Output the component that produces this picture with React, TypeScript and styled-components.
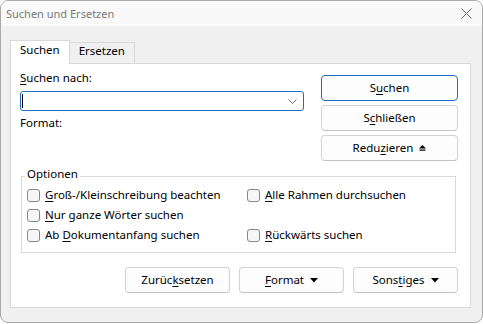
import React from 'react';
import styled, { createGlobalStyle } from 'styled-components';

const Global = createGlobalStyle`
  html, body { margin: 0; padding: 0; background: #ffffff; }
  body {
    font-family: "Segoe UI", "Noto Sans", sans-serif;
    font-size: 11.5px;
    color: #000;
  }
  * { box-sizing: border-box; }
`;

const Window = styled.div`
  width: 483px;
  height: 323px;
  border: 1px solid #a9a9a9;
  border-radius: 8px;
  background: #f0f0f0;
  overflow: hidden;
  display: flex;
  flex-direction: column;
`;

const TitleBar = styled.div`
  height: 25px;
  flex: none;
  background: #f9f9f9;
  display: flex;
  align-items: center;
  justify-content: space-between;
  padding: 0 10px 0 5px;
`;

const Title = styled.span`
  color: #7a7a7a;
  line-height: 16px;
  font-size: 11px;
`;

const Body = styled.div`
  flex: 1;
  display: flex;
  flex-direction: column;
  padding: 14px 11px 14px 9px;
`;

const TabStrip = styled.div`
  display: flex;
  align-items: flex-end;
  height: 23px;
  position: relative;
  z-index: 1;
`;

const Tab = styled.div<{ $active?: boolean }>`
  border: 1px solid #d9d9d9;
  border-bottom: none;
  padding: ${p => (p.$active ? '1px 9px 0' : '0 9px')};
  height: ${p => (p.$active ? '24px' : '21px')};
  margin-bottom: ${p => (p.$active ? '-1px' : '0')};
  margin-left: ${p => (p.$active ? '0' : '-1px')};
  background: ${p => (p.$active ? '#ffffff' : '#f0f0f0')};
  line-height: 16px;
`;

const Panel = styled.div`
  flex: 1;
  background: #ffffff;
  border: 1px solid #d9d9d9;
  padding: 6px 12px 14px 9px;
  display: flex;
  flex-direction: column;
`;

const TopSection = styled.div`
  display: grid;
  grid-template-columns: 1fr 137px;
  column-gap: 17px;
`;

const FieldColumn = styled.div`
  display: flex;
  flex-direction: column;
`;

const Label = styled.div<{ $gap?: number }>`
  line-height: 16px;
  margin-top: ${p => p.$gap ?? 0}px;
`;

const Combo = styled.div`
  margin-top: 5px;
  height: 20px;
  border: 1px solid #1b6ec2;
  border-radius: 3px;
  background: #fff;
  display: flex;
  align-items: center;
  padding: 0 6px 0 1px;
`;

const Caret = styled.span`
  width: 1px;
  height: 14px;
  background: #000;
`;

const Spacer = styled.span`
  flex: 1;
`;

const ButtonColumn = styled.div`
  margin-top: 5px;
  display: flex;
  flex-direction: column;
  gap: 4px;
`;

const Button = styled.div<{ $primary?: boolean; $width?: number }>`
  height: 26px;
  width: ${p => (p.$width ? `${p.$width}px` : 'auto')};
  border: 1px solid ${p => (p.$primary ? '#1b6ec2' : '#d3d3d3')};
  border-bottom-color: ${p => (p.$primary ? '#1b6ec2' : '#c3c3c3')};
  border-radius: 4px;
  background: #fdfdfd;
  display: flex;
  align-items: center;
  justify-content: center;
  gap: 6px;
  line-height: 16px;
`;

const Key = styled.span`
  text-decoration: underline;
  text-decoration-thickness: 1px;
  text-underline-offset: 2px;
`;

const GroupBox = styled.div`
  position: relative;
  margin: 15px 2px 0 1px;
  border: 1px solid #d9d9d9;
  padding: 8px 0 7px 5px;
  display: grid;
  grid-template-columns: 220px 1fr;
  grid-auto-rows: 20px;
`;

const Legend = styled.span`
  position: absolute;
  top: -11px;
  left: 3px;
  padding: 0 2px;
  background: #fff;
  line-height: 16px;
`;

const Option = styled.label<{ $col?: number }>`
  display: flex;
  align-items: center;
  gap: 5px;
  grid-column: ${p => p.$col ?? 1};
  line-height: 16px;
`;

const Check = styled.span`
  width: 13px;
  height: 13px;
  flex: none;
  border: 1px solid #878787;
  border-radius: 3px;
  background: #f6f6f6;
`;

const BottomRow = styled.div`
  margin-top: 14px;
  display: flex;
  justify-content: flex-end;
  gap: 9px;
`;

const DownArrow = () => (
  <svg width="8" height="5" viewBox="0 0 8 5">
    <polygon points="0,0 8,0 4,4.5" fill="#000" />
  </svg>
);

const CollapseIcon = () => (
  <svg width="7" height="6" viewBox="0 0 7 6">
    <polygon points="0,3.5 3.5,0 7,3.5" fill="#000" />
    <rect x="0.5" y="4.5" width="6" height="1.2" fill="#000" />
  </svg>
);

const CloseIcon = () => (
  <svg width="11" height="11" viewBox="0 0 11 11">
    <path d="M0.5 0.5 L10.5 10.5 M10.5 0.5 L0.5 10.5" stroke="#6b6b6b" strokeWidth="1" fill="none" />
  </svg>
);

const Chevron = () => (
  <svg width="9" height="5" viewBox="0 0 9 5">
    <path d="M0.5 0.5 L4.5 4.5 L8.5 0.5" stroke="#707070" strokeWidth="1" fill="none" />
  </svg>
);

export default function App() {
  return (
    <>
      <Global />
      <Window>
        <TitleBar>
          <Title>Suchen und Ersetzen</Title>
          <CloseIcon />
        </TitleBar>
        <Body>
          <TabStrip>
            <Tab $active>Suchen</Tab>
            <Tab>Ersetzen</Tab>
          </TabStrip>
          <Panel>
            <TopSection>
              <FieldColumn>
                <Label><Key>S</Key>uchen nach:</Label>
                <Combo>
                  <Caret />
                  <Spacer />
                  <Chevron />
                </Combo>
                <Label $gap={4}>Format:</Label>
              </FieldColumn>
              <ButtonColumn>
                <Button $primary><span>S<Key>u</Key>chen</span></Button>
                <Button><span>S<Key>c</Key>hließen</span></Button>
                <Button>
                  <span>Redu<Key>z</Key>ieren</span>
                  <CollapseIcon />
                </Button>
              </ButtonColumn>
            </TopSection>
            <GroupBox>
              <Legend>Optionen</Legend>
              <Option><Check /><span><Key>G</Key>roß-/Kleinschreibung beachten</span></Option>
              <Option $col={2}><Check /><span><Key>A</Key>lle Rahmen durchsuchen</span></Option>
              <Option><Check /><span><Key>N</Key>ur ganze Wörter suchen</span></Option>
              <Option><Check /><span>Ab <Key>D</Key>okumentanfang suchen</span></Option>
              <Option $col={2}><Check /><span><Key>R</Key>ückwärts suchen</span></Option>
            </GroupBox>
            <BottomRow>
              <Button $width={105}><span>Zurüc<Key>k</Key>setzen</span></Button>
              <Button $width={105}>
                <span><Key>F</Key>ormat</span>
                <DownArrow />
              </Button>
              <Button $width={105}>
                <span>Sons<Key>t</Key>iges</span>
                <DownArrow />
              </Button>
            </BottomRow>
          </Panel>
        </Body>
      </Window>
    </>
  );
}
